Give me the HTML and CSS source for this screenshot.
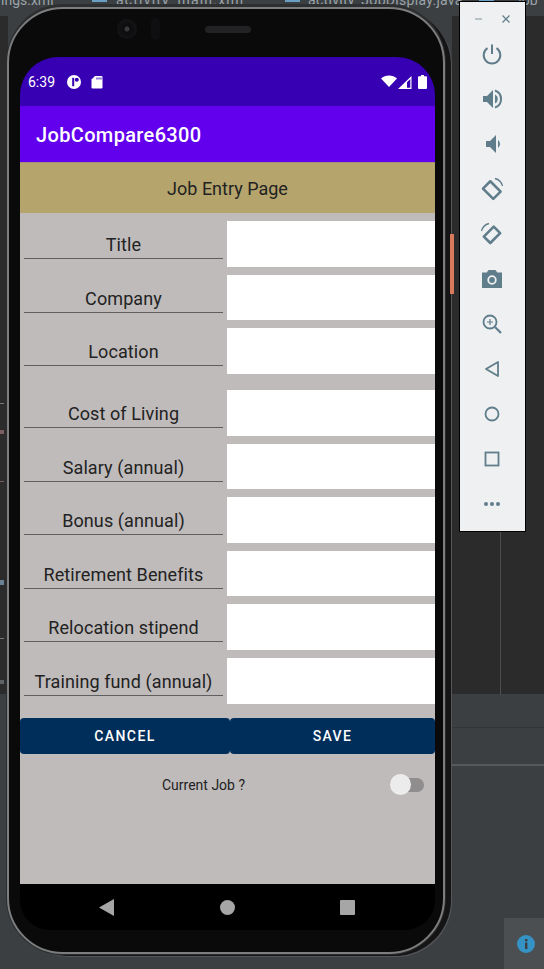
FILE: index.html
```html
<!DOCTYPE html>
<html lang="en">
<head>
<meta charset="utf-8">
<title>JobCompare6300</title>
<link rel="stylesheet" href="styles.css">
</head>
<body>
<div class="desktop">
  <div class="editor ed-left"></div>
  <div class="editor ed-right"></div>
  <div class="ide-vline"></div>
  <div class="ide-line l1"></div>
  <div class="ide-line l2"></div>
  <span class="mark m1"></span>
  <span class="mark m2"></span>
  <span class="mark m3"></span>
  <span class="mark m4"></span>
  <span class="mark m5"></span>
  <span class="mark m6"></span>
  <div class="ide-tabs">
    <span class="tab t1">ings.xml</span>
    <span class="file-ic f1"></span>
    <span class="tab t2">activity_main.xml</span>
    <span class="file-ic f2"></span>
    <span class="tab t3">activity_JobDisplay.java</span>
    <span class="file-ic f3"></span>
    <span class="tab t4">Job</span>
  </div>
  <div class="info-box">
    <svg class="info-icon" viewBox="0 0 18 18"><circle cx="9" cy="9" r="9" fill="#3592c4"/><rect x="8" y="4" width="2.400" height="2.400" fill="#3c3f41"/><rect x="8" y="7.600" width="2.400" height="6.400" fill="#3c3f41"/></svg>
  </div>

  <div class="phone">
    <div class="top-hw">
      <span class="camera"></span>
      <span class="sensor"></span>
      <span class="speaker"></span>
    </div>
    <div class="screen">
      <div class="status">
        <span class="time">6:39</span>
        <svg class="ic-data" viewBox="0 0 16 16" width="16" height="16"><circle cx="8" cy="8" r="7" fill="#fff"/><rect x="6.200" y="3.800" width="2" height="8.400" fill="#3700b3"/><circle cx="10.800" cy="5.800" r="2" fill="#3700b3"/></svg>
        <svg class="ic-sd" viewBox="0 0 12 14" width="12" height="14"><path d="M4 1h6.500a1 1 0 0 1 1 1v10.500a1 1 0 0 1-1 1h-9a1 1 0 0 1-1-1V4.500z" fill="#fff"/><path d="M5.500 2.500h1v2h-1zM7.500 2.500h1v2h-1zM9.500 2.500h1v2h-1z" fill="#3700b3"/></svg>
        <span class="status-gap"></span>
        <svg class="ic-wifi" viewBox="0 0 16 12" width="16" height="12"><path d="M0 3.500C2 1.500 5 .5 8 .5s6 1 8 3L8 12z" fill="#fff"/></svg>
        <svg class="ic-signal" viewBox="0 0 14 13" width="14" height="13"><path d="M13.500 0v13H0zM12.300 3 9 6.300v5.500h3.300z" fill="#fff" fill-rule="evenodd"/></svg>
        <svg class="ic-batt" viewBox="0 0 9 14" width="9" height="14"><path d="M3 0h3v1.200h2a1 1 0 0 1 1 1V13a1 1 0 0 1-1 1H1a1 1 0 0 1-1-1V2.200a1 1 0 0 1 1-1h2z" fill="#fff"/></svg>
      </div>
      <div class="appbar">JobCompare6300</div>
      <div class="page-title">Job Entry Page</div>
      <div class="content">
        <div class="form">
          <div class="group">
            <div class="row"><span class="label">Title</span><span class="field"></span></div>
            <div class="row"><span class="label">Company</span><span class="field"></span></div>
            <div class="row"><span class="label">Location</span><span class="field"></span></div>
          </div>
          <div class="group">
            <div class="row"><span class="label">Cost of Living</span><span class="field"></span></div>
            <div class="row"><span class="label">Salary (annual)</span><span class="field"></span></div>
            <div class="row"><span class="label">Bonus (annual)</span><span class="field"></span></div>
            <div class="row"><span class="label">Retirement Benefits</span><span class="field"></span></div>
            <div class="row"><span class="label">Relocation stipend</span><span class="field"></span></div>
            <div class="row"><span class="label">Training fund (annual)</span><span class="field"></span></div>
          </div>
        </div>
        <div class="actions">
          <button class="btn btn-cancel">CANCEL</button>
          <button class="btn btn-save">SAVE</button>
        </div>
        <div class="current">
          <span class="current-label">Current Job ?</span>
          <span class="switch"><span class="thumb"></span></span>
        </div>
      </div>
      <div class="nav">
        <svg viewBox="0 0 15 17" width="15" height="17"><path d="M15 0v17L0 8.500z" fill="#a6a6a6"/></svg>
        <span class="nav-dot"></span>
        <span class="nav-sq"></span>
      </div>
    </div>
  </div>

  <div class="ide-scroll"></div>

  <div class="toolbar">
    <div class="win-ctl">
      <svg viewBox="0 0 10 10" width="10" height="10"><path d="M1 5h7" stroke="#90a4ae" stroke-width="1.200"/></svg>
      <svg viewBox="0 0 10 10" width="10" height="10"><path d="M1.500 1.500l7 7M8.500 1.500l-7 7" stroke="#607d8b" stroke-width="1.200"/></svg>
    </div>
    <svg class="tool" viewBox="0 0 24 24"><path d="M12 2.500v9.500" stroke="#607d8b" stroke-width="2" fill="none"/><path d="M7.500 6.200a8.300 8.300 0 1 0 9 0" stroke="#607d8b" stroke-width="2" fill="none"/></svg>
    <svg class="tool" viewBox="0 0 24 24"><path d="M3 9v6h4l6 6V3L7 9z" fill="#607d8b"/><path d="M15 7.500a5 5 0 0 1 0 9z" fill="#607d8b"/><path d="M15 3.500a9 9 0 0 1 0 17" stroke="#607d8b" stroke-width="2" fill="none"/></svg>
    <svg class="tool" viewBox="0 0 24 24"><path d="M6 9v6h4l6 6V3l-6 6z" fill="#607d8b"/><path d="M18 8a5 5 0 0 1 0 8z" fill="#607d8b"/></svg>
    <svg class="tool" viewBox="0 0 24 24"><path d="M1.500 11.500 10 3l12 12-8.500 8.500z" transform="translate(12 12) scale(.86) translate(-12 -12)" fill="none" stroke="#607d8b" stroke-width="3" stroke-linejoin="round"/><path d="M15 1.500A10.500 10.500 0 0 1 22.500 9" fill="none" stroke="#607d8b" stroke-width="1.300"/></svg>
    <svg class="tool" viewBox="0 0 24 24"><path d="M2.500 15 14 3.500 21.500 11 10 22.500z" transform="translate(12 12) scale(.86) translate(-12 -12)" fill="none" stroke="#607d8b" stroke-width="3" stroke-linejoin="round"/><path d="M1.500 9A10.500 10.500 0 0 1 9 1.500" fill="none" stroke="#607d8b" stroke-width="1.300"/></svg>
    <svg class="tool" viewBox="0 0 24 24"><path d="M8.500 3h7l1.800 2.500H22V21H2V5.500h4.700z" fill="#607d8b"/><circle cx="12" cy="13" r="3.800" fill="none" stroke="#eff0f1" stroke-width="1.800"/></svg>
    <svg class="tool" viewBox="0 0 24 24"><circle cx="10" cy="10" r="6.500" fill="none" stroke="#607d8b" stroke-width="1.800"/><path d="M15 15l6 6" stroke="#607d8b" stroke-width="2.200"/><path d="M10 7v6M7 10h6" stroke="#607d8b" stroke-width="1.200"/></svg>
    <svg class="tool" viewBox="0 0 24 24"><path d="M18 5v14L6 12z" fill="none" stroke="#607d8b" stroke-width="1.800" stroke-linejoin="round"/></svg>
    <svg class="tool" viewBox="0 0 24 24"><circle cx="12" cy="12" r="6.500" fill="none" stroke="#607d8b" stroke-width="1.800"/></svg>
    <svg class="tool" viewBox="0 0 24 24"><rect x="5.500" y="5.500" width="13" height="13" fill="none" stroke="#607d8b" stroke-width="1.800"/></svg>
    <svg class="tool" viewBox="0 0 24 24"><circle cx="6" cy="12" r="2" fill="#607d8b"/><circle cx="12" cy="12" r="2" fill="#607d8b"/><circle cx="18" cy="12" r="2" fill="#607d8b"/></svg>
  </div>
</div>
</body>
</html>
```
FILE: styles.css
```css
* { box-sizing: border-box; }
html, body { margin: 0; padding: 0; }
body { width: 544px; height: 969px; overflow: hidden; background: #3c3f41; font-family: Roboto, "Liberation Sans", sans-serif; }
.desktop { position: relative; width: 544px; height: 969px; overflow: hidden; background: #3c3f41; }

.editor { position: absolute; top: 16px; height: 678px; background: #2b2b2b; }
.ed-left { left: 0; width: 8px; }
.ed-right { left: 452px; width: 92px; }
.ide-vline { position: absolute; left: 500px; top: 532px; width: 1px; height: 163px; background: #4d4d4d; }
.ide-line { position: absolute; left: 452px; width: 92px; }
.l1 { top: 727px; height: 1px; background: #323436; }
.l2 { top: 764px; height: 2px; background: #56595b; }
.mark { position: absolute; left: 0; width: 4px; height: 1px; background: #77787a; }
.m1 { top: 403px; }
.m2 { top: 430px; height: 4px; background: #7d5c62; }
.m3 { top: 481px; background: #7d5c62; }
.m4 { top: 580px; height: 5px; background: #6a8296; }
.m5 { top: 638px; }
.m6 { top: 680px; height: 4px; background: #5f6264; }

.ide-tabs { position: absolute; left: 0; top: -8px; width: 544px; height: 24px; color: #9aa3aa; font-size: 14px; white-space: nowrap; }
.tab { position: absolute; top: 0; }
.t1 { left: 1px; }
.t2 { left: 116px; letter-spacing: 1.200px; }
.t3 { left: 308px; letter-spacing: .300px; }
.t4 { left: 514px; }
.file-ic { position: absolute; top: 6px; width: 15px; height: 4px; background: #6a9fc4; }
.f1 { left: 92px; }
.f2 { left: 285px; }
.f3 { left: 479px; }
.ide-scroll { position: absolute; left: 450px; top: 234px; width: 4px; height: 60px; background: #d97a5c; }
.info-box { position: absolute; left: 504px; top: 918px; width: 40px; height: 51px; display: flex; align-items: center; padding-left: 13px; background: #4b4f52; }
.info-icon { width: 18px; height: 18px; }

.phone { position: absolute; left: 7px; top: 7px; width: 438px; height: 947px; display: flex; flex-direction: column; padding: 0 0 0 11px; border-radius: 56px; background: #0a0a0b; border: 2px solid #7c7d7e; box-shadow: 0 0 0 1px #2c2d2e, 0 -3px 0 0 #2e2f30, 6px 2px 0 0 #151516, 7px 3px 0 0 #54565a; }
.top-hw { display: flex; align-items: center; height: 48px; flex: none; padding: 0 0 8px 97px; }
.camera { width: 20px; height: 20px; border-radius: 50%; background: radial-gradient(circle, #3a3a3c 0 2px, #0c0c0e 3px, #141416 10px); }
.sensor { width: 9px; height: 22px; margin-left: 14px; border-radius: 5px; background: #0f0f11; }
.speaker { width: 46px; height: 7px; margin-left: 45px; border-radius: 4px; background: #222224; }

.screen { display: flex; flex-direction: column; width: 415px; height: 873px; flex: none; border-radius: 38px 38px 30px 30px; overflow: hidden; }
.status { display: flex; align-items: center; height: 49px; flex: none; padding: 0 8px; background: #3700b3; color: #fff; }
.time { width: 38px; font-size: 14px; }
.ic-sd { margin-left: 9px; }
.status-gap { flex: 1; }
.ic-wifi { margin-right: 1px; margin-bottom: 1px; }
.ic-signal { margin-right: 6px; margin-top: 1px; }
.appbar { height: 56px; flex: none; display: flex; align-items: center; padding: 2px 0 0 16px; background: #6200ee; color: #fff; font-size: 20px; font-weight: 500; letter-spacing: .350px; }
.page-title { height: 51px; flex: none; display: flex; align-items: center; justify-content: center; background: #b5a56d; border-top: 1px solid #a58f7c; color: #222; font-size: 18px; }

.content { display: flex; flex-direction: column; flex: 1; background: #bfbbbb; padding-top: 8.300px; }
.form { display: flex; flex-direction: column; gap: 16px; }
.group { display: flex; flex-direction: column; gap: 8px; }
.row { display: flex; gap: 4px; height: 45.600px; padding-left: 4px; }
.label { width: 199px; height: 38px; display: flex; align-items: flex-end; justify-content: center; padding-bottom: 3px; border-bottom: 1px solid #5f5f5f; color: #222; font-size: 18px; letter-spacing: .100px; white-space: nowrap; }
.field { flex: 1; background: #fff; }

.actions { display: flex; margin-top: 14px; }
.btn { height: 36px; padding: 1px 0 0; border: 0; border-radius: 4px; background: #002e5b; color: #fff; font: 500 14px Roboto, sans-serif; letter-spacing: 1.400px; }
.btn-cancel { flex: 0 0 210px; }
.btn-save { flex: 1; }
.current { display: flex; align-items: center; height: 32px; margin-top: 15px; padding: 0 11px 0 142px; }
.current-label { flex: 1; color: #222; font-size: 14px; }
.switch { position: relative; width: 33px; height: 14px; border-radius: 7px; background: #8f8d8d; }
.thumb { position: absolute; left: -1px; top: -3.500px; width: 21px; height: 21px; border-radius: 50%; background: #ececec; }

.nav { display: flex; align-items: center; height: 46px; flex: none; padding: 0 80px 0 79px; justify-content: space-between; background: #000; }
.nav-dot { width: 15px; height: 15px; border-radius: 50%; background: #a6a6a6; }
.nav-sq { width: 15px; height: 15px; border-radius: 1px; background: #a6a6a6; }

.toolbar { position: absolute; left: 459px; top: 1px; width: 67px; height: 531px; display: flex; flex-direction: column; align-items: center; background: #eff0f1; border: 1px solid #000; }
.win-ctl { display: flex; flex: none; justify-content: space-between; align-self: stretch; height: 40px; padding: 12px 14px 0 14px; }
.tool { width: 24px; height: 24px; margin: 0 2px 21px 0; flex: none; }
.tool:last-child { margin-bottom: 0; }
```
